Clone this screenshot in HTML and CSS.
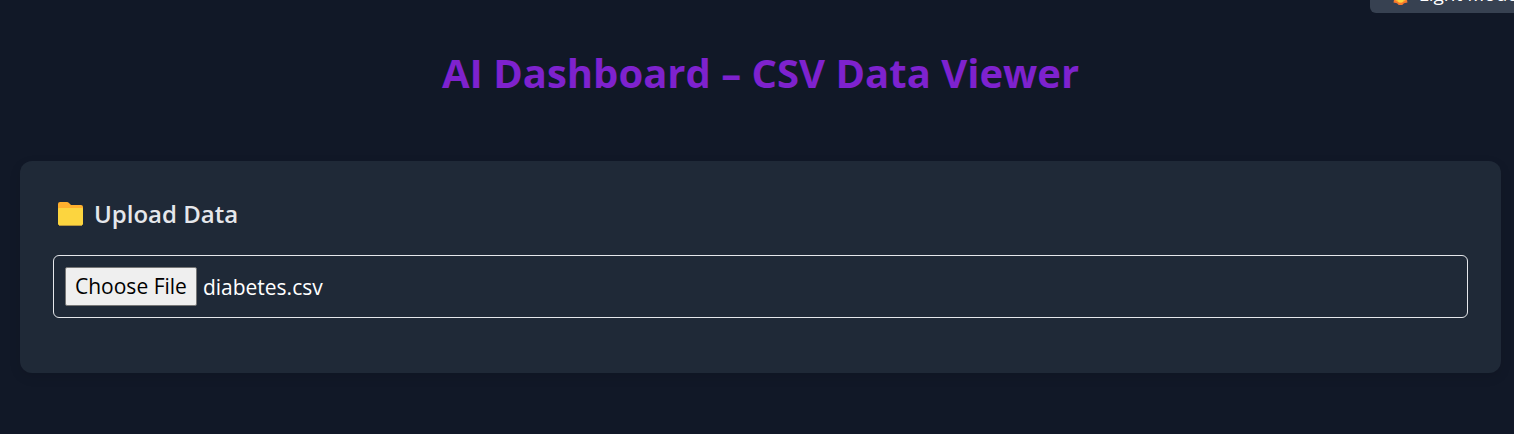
FILE: index.html
```html
<!DOCTYPE html>
<html lang="en">
<head>
  <meta charset="utf-8">
  <meta name="viewport" content="width=device-width, initial-scale=1">
  <title>AI Dashboard – CSV Data Viewer</title>
  <link rel="stylesheet" href="styles.css">
</head>
<body class="page">
  <button type="button" class="theme-toggle">
    <svg class="theme-icon" viewBox="0 0 24 24" aria-hidden="true">
      <path fill="#f8782c" d="M12 0l3 4 5-1-1 5 4 4-4 4 1 5-4 1-2 2h-4l-2-2-4-1 1-5-4-4 4-4-1-5 5 1z"/>
      <circle cx="12" cy="12" r="9" fill="#ffb02e"/>
      <path fill="#fcd53f" d="M7 16h10l-3 5h-4z"/>
    </svg>
    <span>Light Mode</span>
  </button>
  <header class="header">
    <h1 class="title">AI Dashboard – CSV Data Viewer</h1>
  </header>
  <main class="content">
    <section class="card">
      <h2 class="card-title">
        <svg class="folder-icon" viewBox="0 0 26 24" aria-hidden="true">
          <path fill="#ffb02e" d="M1 2Q1 0 3 0h7q1 0 2 1l2 2h10q2 0 2 2v8H1z"/>
          <path fill="#fcd53f" d="M1 7q0-1 1-1h23q1 0 1 1v15q0 1-1 1H2q-1 0-1-1z"/>
          <path stroke="#b8963a" d="M2 23.5h23"/>
        </svg>
        <span>Upload Data</span>
      </h2>
      <div class="file-field">
        <input class="file-input" type="file" id="csv-file" accept=".csv">
        <label class="file-button" for="csv-file">Choose File</label>
        <output class="file-name" for="csv-file">diabetes.csv</output>
      </div>
    </section>
  </main>
  <script src="script.js"></script>
</body>
</html>
```

FILE: script.js
```js
const input = document.querySelector(".file-input");
const fileName = document.querySelector(".file-name");

input.addEventListener("change", () => {
  fileName.textContent = input.files.length ? input.files[0].name : "No file chosen";
});
```

FILE: styles.css
```css
* {
  box-sizing: border-box;
}

.page {
  margin: 0;
  min-height: 100vh;
  overflow: hidden;
  background: #111827;
  color: #ffffff;
  font-family: "Segoe UI", "Open Sans", "Noto Sans", sans-serif;
}

.theme-toggle {
  position: absolute;
  top: -28px;
  right: -24px;
  display: flex;
  align-items: center;
  gap: 8px;
  padding: 8px 20px 4px;
  border: 0;
  border-radius: 6px;
  background: #374151;
  color: #ffffff;
  font: inherit;
  font-size: 19px;
  line-height: 29px;
  cursor: pointer;
}

.theme-icon {
  width: 21px;
  height: 21px;
}

.header {
  padding: 43px 13px 58px 20px;
  text-align: center;
}

.title {
  margin: 0;
  color: #7e22ce;
  font-size: 40px;
  font-weight: 700;
  line-height: 60px;
}

.content {
  padding: 0 13px 60px 20px;
}

.card {
  padding: 31px 33px 55px;
  border-radius: 12px;
  background: #1f2937;
  box-shadow: 0 4px 12px rgba(0, 0, 0, 0.1);
}

.card-title {
  display: flex;
  align-items: center;
  gap: 11px;
  margin: 0 0 19px;
  padding-left: 4px;
  color: #e5e7eb;
  font-size: 24px;
  font-weight: 600;
  line-height: 44px;
}

.folder-icon {
  width: 26px;
  height: 24px;
}

.file-field {
  display: flex;
  align-items: center;
  gap: 6px;
  padding: 11px;
  border: 1px solid #e5e7eb;
  border-radius: 6px;
  font-size: 21px;
}

.file-input {
  position: absolute;
  width: 1px;
  height: 1px;
  opacity: 0;
}

.file-button {
  padding: 0 9px;
  border: 1px solid #767676;
  border-radius: 2px;
  background: #efefef;
  color: #000000;
  line-height: 37px;
  cursor: pointer;
}

.file-input:focus-visible + .file-button {
  outline: 2px solid #7e22ce;
}
```
